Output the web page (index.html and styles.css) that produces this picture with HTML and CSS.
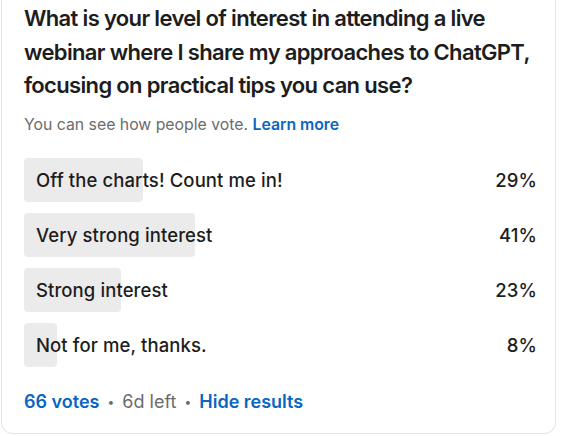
FILE: index.html
```html
<!DOCTYPE html>
<html lang="en">

<head>
  <meta charset="UTF-8" />
  <meta name="viewport" content="width=device-width, initial-scale=1.0" />
  <title>Poll</title>
  <link rel="stylesheet" href="styles.css">
</head>

<body>
  <div class="poll-card">
    <h1 class="poll-question">What is your level of interest in attending a live webinar where I share my approaches to ChatGPT, focusing on practical tips you can use?</h1>

    <p class="poll-note">You can see how people vote. <a href="#">Learn more</a></p>

    <!-- Results -->
    <ul class="poll-options">
      <li class="poll-option">
        <span class="poll-bar" style="width: 119px"></span>
        <span class="poll-label">Off the charts! Count me in!</span>
        <span class="poll-pct">29%</span>
      </li>
      <li class="poll-option">
        <span class="poll-bar" style="width: 171px"></span>
        <span class="poll-label">Very strong interest</span>
        <span class="poll-pct">41%</span>
      </li>
      <li class="poll-option">
        <span class="poll-bar" style="width: 97px"></span>
        <span class="poll-label">Strong interest</span>
        <span class="poll-pct">23%</span>
      </li>
      <li class="poll-option">
        <span class="poll-bar" style="width: 33px"></span>
        <span class="poll-label">Not for me, thanks.</span>
        <span class="poll-pct">8%</span>
      </li>
    </ul>

    <div class="poll-footer">
      <a href="#">66 votes</a>
      <span class="dot">•</span>
      <span class="muted">6d left</span>
      <span class="dot">•</span>
      <a href="#">Hide results</a>
    </div>
  </div>
</body>

</html>
```

FILE: styles.css
```css
body {
  font-family: Inter, "Noto Sans", sans-serif;
  background-color: #ffffff;
  margin: 0;
  color: #1d1d1d;
}

.poll-card {
  box-sizing: border-box;
  width: 555px;
  height: 434px;
  margin-left: 1px;
  padding: 2px 18px 0 22px;
  border: 1px solid #e4e4e4;
  border-top: none;
  border-radius: 0 0 12px 12px;
}

.poll-question {
  margin: 0;
  font-size: 22px;
  line-height: 33.5px;
  font-weight: 600;
  letter-spacing: -0.66px;
}

.poll-note {
  margin: 12px 0 0;
  font-size: 15.8px;
  line-height: 20px;
  color: #6b6b6b;
}

.poll-note a,
.poll-footer a {
  color: #0a66c2;
  font-weight: 600;
  text-decoration: none;
}

.poll-options {
  list-style: none;
  margin: 23px 0 0;
  padding: 0;
}

.poll-option {
  position: relative;
  display: flex;
  align-items: center;
  justify-content: space-between;
  height: 44px;
  margin-bottom: 11px;
  font-size: 18.5px;
  font-weight: 500;
  letter-spacing: 0.1px;
}

.poll-bar {
  position: absolute;
  left: 0;
  top: 0;
  bottom: 0;
  background-color: #ebebeb;
  border-radius: 4px;
}

.poll-label {
  position: relative;
  padding-left: 12px;
}

.poll-pct {
  position: relative;
}

.poll-footer {
  margin-top: 24px;
  font-size: 18px;
  color: #6b6b6b;
}

.poll-footer .dot {
  font-size: 12px;
  margin: 0 3px;
  vertical-align: 2px;
}
```
